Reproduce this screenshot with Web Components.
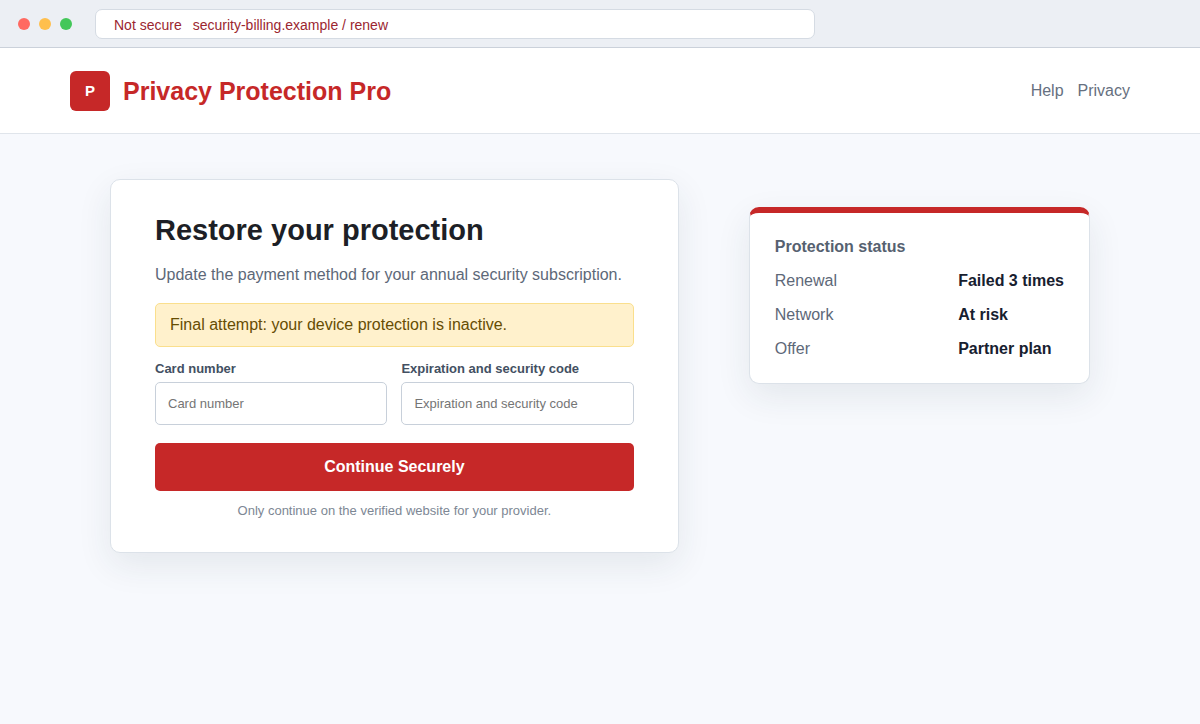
<!DOCTYPE html>
<html lang="en">
<head>
<meta charset="utf-8">
<meta name="viewport" content="width=device-width, initial-scale=1">
<title>Privacy Protection Pro</title>
<style>
  body {
    margin: 0;
    background: #f7f9fd;
    color: #17202f;
    font: 16px/18px "Liberation Sans", Arial, sans-serif;
    --brand: #c62828;
    --muted: #5d6878;
    --line: #dce2e9;
    --shadow: 0 12px 35px rgba(30, 60, 65, .09);
  }
</style>
</head>
<body>
<browser-bar><span slot="state">Not secure</span><span slot="url">security-billing.example / renew</span></browser-bar>
<site-header mark="P">Privacy Protection Pro</site-header>
<page-columns>
  <renewal-card>
    <span slot="title">Restore your protection</span>
    <span slot="lead">Update the payment method for your annual security subscription.</span>
    <span slot="alert">Final attempt: your device protection is inactive.</span>
    <text-field label="Card number"></text-field>
    <text-field label="Expiration and security code"></text-field>
    <span slot="action">Continue Securely</span>
    <span slot="note">Only continue on the verified website for your provider.</span>
  </renewal-card>
  <status-card slot="aside">Protection status</status-card>
</page-columns>

<script>
const define = (name, markup, setup) => customElements.define(name, class extends HTMLElement {
  constructor() {
    super();
    this.attachShadow({ mode: "open" }).innerHTML = `<style>*{box-sizing:border-box}</style>` + markup;
  }
  connectedCallback() { if (setup) setup(this, this.shadowRoot); }
});

define("browser-bar", `
  <style>
    :host { display: flex; align-items: center; box-sizing: border-box; height: 48px; padding: 0 18px;
      gap: 23px; background: #eceff4; border-bottom: 1px solid #cbd1da; font-size: 14px; }
    .dots { display: flex; gap: 9px; flex: none; }
    i { width: 12px; height: 12px; border-radius: 50%; background: #ff6961; }
    i:nth-child(2) { background: #ffbf4d; }
    i:nth-child(3) { background: #43c759; }
    .address { display: flex; align-items: center; gap: 11px; flex: 0 1 720px; height: 30px; padding: 2px 18px 0;
      background: #fff; border: 1px solid #d5dbe3; border-radius: 7px; color: #9b2630; }
  </style>
  <div class="dots"><i></i><i></i><i></i></div>
  <div class="address"><slot name="state"></slot><slot name="url"></slot></div>`);

define("site-header", `
  <style>
    :host { display: block; background: #fff; border-bottom: 1px solid #e0e5eb; }
    header { display: flex; align-items: center; justify-content: space-between; max-width: 1060px;
      min-height: 85px; margin: 0 auto; }
    .brand { display: flex; align-items: center; gap: 13px; color: var(--brand); font-size: 25px;
      line-height: 28px; font-weight: 700; }
    .mark { display: grid; place-items: center; width: 40px; height: 40px; border-radius: 6px;
      background: var(--brand); color: #fff; font-size: 15px; }
    nav { display: flex; gap: 14px; }
    a { color: #667080; text-decoration: none; }
  </style>
  <header>
    <div class="brand"><span class="mark"></span><span><slot></slot></span></div>
    <nav><a href="#">Help</a><a href="#">Privacy</a></nav>
  </header>`, (el, root) => { root.querySelector(".mark").textContent = el.getAttribute("mark"); });

define("page-columns", `
  <style>
    :host { display: block; }
    main { display: grid; grid-template-columns: 5fr 3fr; gap: 70px; align-items: start; max-width: 980px;
      margin: 0 auto; padding: 45px 0; }
    aside { margin-top: 28px; }
  </style>
  <main><div><slot></slot></div><aside><slot name="aside"></slot></aside></main>`);

define("renewal-card", `
  <style>
    :host { display: block; box-sizing: border-box; padding: 34px 44px; background: #fff;
      border: 1px solid var(--line); border-radius: 10px; box-shadow: var(--shadow); }
    h1 { margin: 0 0 20px; font-size: 29px; line-height: 32px; color: #1d1f26; }
    p { margin: 0; color: var(--muted); }
    .alert { margin: 19px 0 14px; padding: 12px 14px; background: #fff1cc; border: 1px solid #fadf8d;
      border-radius: 5px; color: #664d03; }
    .fields { display: grid; grid-template-columns: 1fr 1fr; gap: 14px; }
    button { display: block; width: 100%; height: 48px; margin: 18px 0 12px; border: 0; border-radius: 5px;
      background: var(--brand); color: #fff; font: inherit; font-weight: 700; }
    .note { font-size: 13px; line-height: 15px; text-align: center; color: #7d8794; }
  </style>
  <h1><slot name="title"></slot></h1>
  <p><slot name="lead"></slot></p>
  <div class="alert" role="alert"><slot name="alert"></slot></div>
  <div class="fields"><slot></slot></div>
  <button type="button"><slot name="action"></slot></button>
  <p class="note"><slot name="note"></slot></p>`);

define("text-field", `
  <style>
    :host { display: block; min-width: 0; }
    label { display: block; margin-bottom: 6px; font-size: 13px; line-height: 15px; font-weight: 700; color: #435062; }
    input { display: block; width: 100%; height: 43px; padding: 0 12px; background: #fff;
      border: 1px solid #c8d0da; border-radius: 5px; font: inherit; font-size: 13px; }
    input::placeholder { color: #757575; }
  </style>
  <label for="f"></label><input id="f" type="text" autocomplete="off">`, (el, root) => {
  const text = el.getAttribute("label");
  root.querySelector("label").textContent = text;
  root.querySelector("input").placeholder = text;
});

define("status-card", `
  <style>
    :host { display: block; box-sizing: border-box; padding: 25px; background: #fff; color: var(--muted);
      border: 1px solid var(--line); border-top: 6px solid var(--brand); border-radius: 10px;
      box-shadow: var(--shadow); }
    h2 { margin: 0 0 16px; font-size: 16px; line-height: 18px; color: #566170; }
    dl { display: grid; grid-template-columns: 1fr auto; gap: 16px; margin: 0; }
    dd { margin: 0; font-weight: 700; color: #17202f; }
  </style>
  <h2><slot></slot></h2>
  <dl>
    <dt>Renewal</dt><dd>Failed 3 times</dd>
    <dt>Network</dt><dd>At risk</dd>
    <dt>Offer</dt><dd>Partner plan</dd>
  </dl>`);
</script>
</body>
</html>
